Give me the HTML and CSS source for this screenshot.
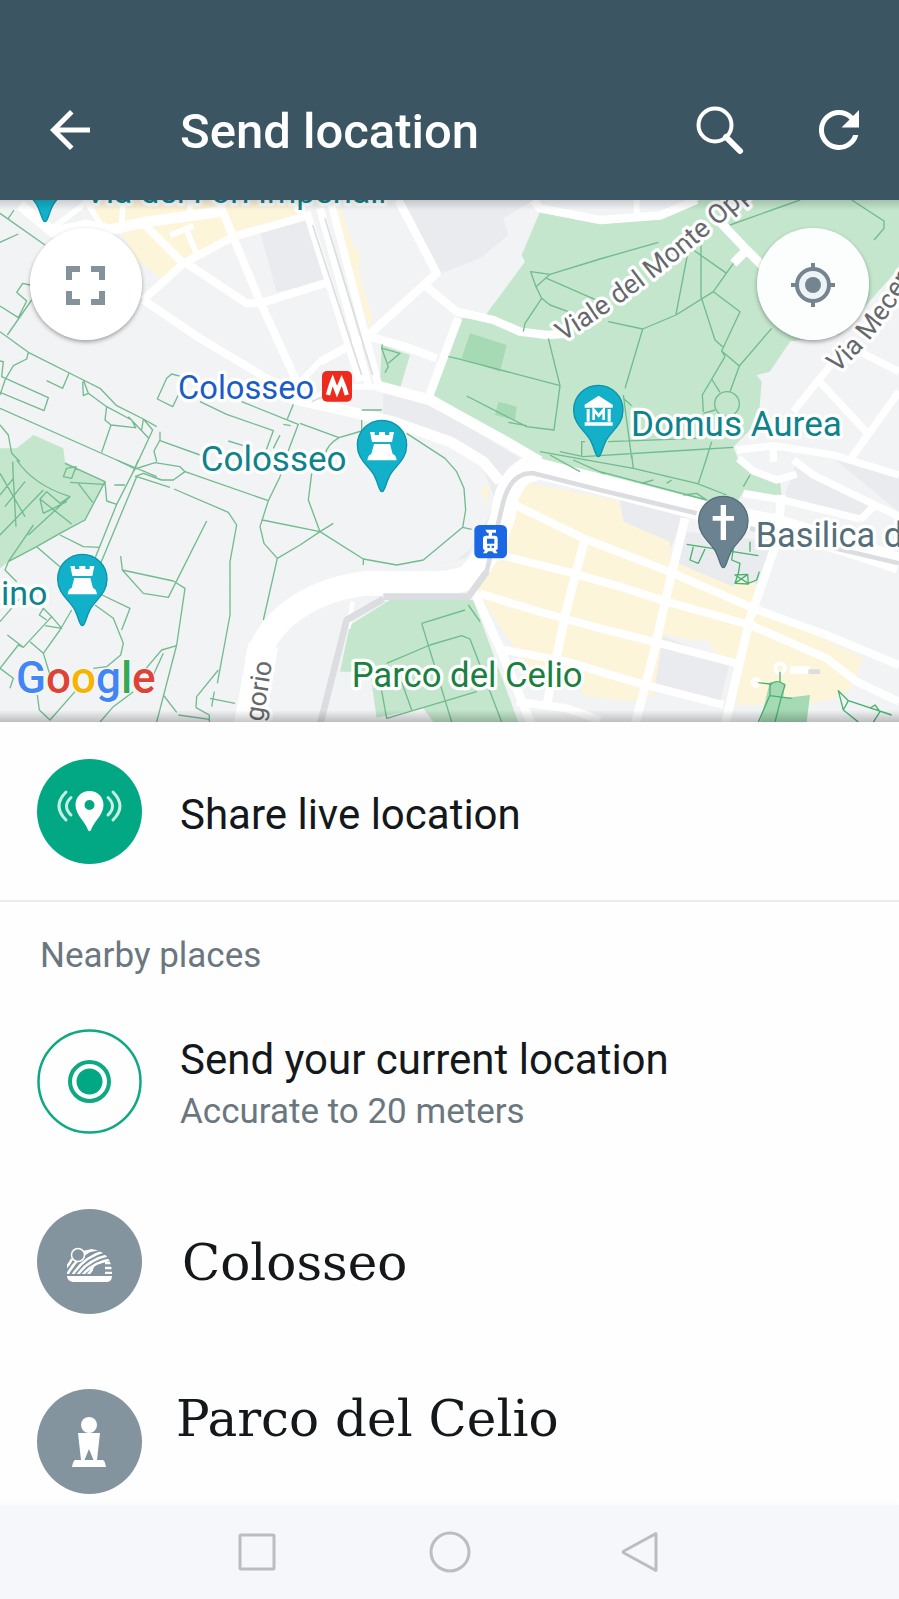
FILE: index.html
```html
<!DOCTYPE html>
<html lang="en">
<head>
<meta charset="utf-8">
<meta name="viewport" content="width=device-width, initial-scale=1">
<title>Send location</title>
<link rel="stylesheet" href="styles.css">
</head>
<body>
<header class="topbar">
  <button class="icon-btn" aria-label="Back">
    <svg viewBox="0 0 24 24"><path fill="currentColor" d="M20 11H7.83l5.59-5.59L12 4l-8 8 8 8 1.41-1.41L7.83 13H20z"/></svg>
  </button>
  <h1 class="topbar-title">Send location</h1>
  <button class="icon-btn" aria-label="Search">
    <svg viewBox="0 0 60 60" fill="none" stroke="currentColor"><circle cx="26" cy="25" r="16.500" stroke-width="4"/><path d="M37 37L51 51" stroke-width="6" stroke-linecap="round"/></svg>
  </button>
  <button class="icon-btn" aria-label="Refresh">
    <svg viewBox="0 0 24 24"><path fill="currentColor" d="M17.65 6.35A7.96 7.96 0 0 0 12 4a8 8 0 1 0 7.73 10h-2.080A6 6 0 1 1 12 6c1.660 0 3.140.69 4.220 1.780L13 11h7V4z"/></svg>
  </button>
</header>

<section class="map" aria-label="Map">
<svg class="map-art" viewBox="0 15 2697 1566" preserveAspectRatio="xMidYMid slice">
  <defs>
    <path id="pin" d="M0 140C-9 140-10 118-22 94C-38 62-74 46-74 0A74 74 0 0 1 74 0C74 46 38 62 22 94C10 118 9 140 0 140Z"/>
    <path id="rook" fill="#fff" d="M-36-39h14v9h13v-9h18v9h13v-9h14l-6 30h-60zM-24-3h48l8 30q10 3 12 19h-88q2-16 12-19z"/>
    <linearGradient id="edgeTop" x2="0" y2="1"><stop stop-color="#000" stop-opacity=".16"/><stop offset="1" stop-color="#000" stop-opacity="0"/></linearGradient>
    <linearGradient id="edgeBottom" x2="0" y2="1"><stop stop-color="#000" stop-opacity="0"/><stop offset="1" stop-color="#000" stop-opacity=".22"/></linearGradient>
  </defs>
  <rect y="15" width="2697" height="1566" fill="#f1f3f4"/>

  <g class="blocks">
    <path d="M780 110L930 70L985 260L830 290ZM1195 15H1600L1510 70L1525 120L1440 190L1310 240ZM1150 590L1290 625L1560 790L1500 900L1400 1090L1300 1110L1370 1095L1488 1000L1497 940L1440 800L1340 735L1150 670Z"/>
    <path d="M1860 915L2060 960L2010 1060L1870 980ZM2060 1010L2330 1040L2260 1210L2020 1120ZM1980 1320L2190 1400L2160 1520L1950 1480ZM2390 800L2620 940L2600 970L2350 915ZM2500 790L2697 840V950Z"/>
  </g>
  <g class="yellow">
    <path d="M270 15H925L900 70L700 122L550 205L485 252L410 195L370 120L290 90ZM1000 40L1022 40L1060 150L1082 180L1075 230L1118 370L1108 400ZM1440 880L1470 870L1460 930Z"/>
    <path d="M1560 860L1800 905L1858 920L1870 980L2010 1040L2010 1095L2200 1175L2220 1150L2280 1170L2270 1230L2590 1390L2550 1485L2500 1510L2410 1530L2210 1530L2220 1400L2140 1370L2130 1340L1990 1320L1960 1500L1890 1520L1750 1500L1740 1470L1590 1430L1440 1200L1430 1180L1480 1090L1520 1000Z"/>
  </g>
  <g class="park">
    <path d="M1620 50L1800 88L1980 70L2100 15H2697V220L2520 420L2370 440L2310 530L2270 540L2285 560L2275 680L2200 755L2215 795L2260 840L2340 860L2345 905L2230 890L2215 915L2120 925L1800 845L1620 795L1480 705L1300 600L1385 370L1450 370L1575 200L1565 180Z"/>
    <path d="M1145 450L1230 480L1200 580L1140 565ZM1170 1215H1420L1440 1270L1555 1581H1300L1270 1540L1130 1568L1110 1430H1020L1050 1290ZM0 760H50L100 720L190 760L195 800L315 860L255 975L110 1055L25 1100L0 1120Z"/>
  </g>
  <path class="base" d="M2697 220V500L2300 600L2310 530L2370 440L2520 420Z"/>
  <path class="park-dark" d="M1410 415L1520 450L1500 530L1385 490ZM1495 620L1550 635L1545 675L1485 660ZM2310 1460L2355 1465L2350 1510L2430 1500L2420 1581H2280Z"/>

  <g class="road">
    <path stroke-width="32" d="M60 30L160 112L260 90L330 104L440 80L660 50"/>
    <path stroke-width="17" d="M150 105L230 45L260 20L300 85M370 15L365 85M570 15V60M510 122L580 92M560 105L592 182"/>
    <path stroke-width="24" d="M430 85L550 205M660 30L780 320L890 560M430 315L550 205L700 125L930 60M430 315L600 430L800 550L910 600M560 205L740 325L780 325L990 260"/>
    <path stroke-width="25" d="M1195 15L1310 235L1100 425L960 500M1280 275L1370 350L1480 375L1560 410L1640 420L1720 415M1375 370L1285 610M1110 425L1230 460L1310 490M1600 15L1620 40L1800 75L1980 62L2090 15"/>
    <path stroke-width="18" d="M1910 15V60M960 500L900 560M930 620L1000 575L1140 575"/>
    <path stroke-width="32" d="M1130 572L1290 615L1500 730L1620 800M870 610L1050 650L1180 680L1350 740L1450 800L1500 860"/>
    <path stroke-width="23" d="M920 50L1080 560M960 40L1105 570M995 30L1135 570"/>
    <path stroke-width="27" d="M2150 70L2240 165L2290 215M2200 205L2240 165"/>
    <path stroke-width="22" d="M2380 650L2460 550L2510 490M2460 560L2605 718M2580 470L2697 530M2550 795L2605 718L2697 590M2210 765L2320 752L2500 780L2697 840M2320 760V800M2215 790L2260 828L2330 855L2390 838M2380 795L2440 840L2697 965M2580 975L2620 935M2230 895L2350 915L2580 972"/>
    <path stroke-width="74" d="M1590 820Q1520 850 1510 960Q1470 1090 1400 1150L1340 1165H1100Q960 1180 860 1260Q790 1320 770 1400"/>
    <path stroke-width="90" d="M790 1350L745 1600"/>
    <path stroke-width="62" d="M1560 840L1620 822L1800 868L2100 945L2330 990L2530 1050L2697 1105"/>
    <path stroke-width="24" d="M1535 925L1750 1030L2020 1135L2260 1240L2480 1320L2697 1410M1500 1080L1700 1130L1860 1175L2000 1220L2250 1290L2480 1390L2570 1460L2697 1520M1440 1195L1600 1245L1800 1300L1960 1340L2210 1405M1490 1360L1700 1400L1900 1460L2170 1530M1550 1520L1700 1540L1800 1575"/>
    <path stroke-width="26" d="M1755 1030L1700 1240L1640 1530M2055 970L2000 1200L1960 1380L1905 1590M2345 900L2330 1040L2250 1270L2175 1590M1420 1185L1500 1360L1595 1590"/>
    <path stroke-width="14" d="M1058 1220L1045 1300"/>
    <circle cx="2340" cy="1420" r="14" stroke-width="12"/><circle cx="2268" cy="1462" r="10" stroke-width="12"/>
    <path stroke-width="22" d="M2370 1425H2430"/>
  </g>
  <g class="rail">
    <path stroke-width="5" d="M938 90L1085 540M975 70L1118 540M935 620L1000 590"/>
    <path stroke-width="20" d="M960 1590L1040 1275L1150 1212M1150 1205H1405L1460 1130"/>
    <path stroke-width="14" d="M1405 1205L1460 1130L1510 920Q1535 830 1600 835L1800 885L2090 955M2250 1000L2697 1105"/>
    <path stroke-width="14" d="M2425 1430H2460"/>
  </g>

  <g class="trail">
    <path d="M0 55L135 150M25 70L42 45M0 142L55 117M90 270L68 265L50 292L80 318L55 368L0 333M95 315L22 420M0 410L85 472L250 555L300 580L350 632L430 672L470 695M85 472L80 492L40 512L15 555L0 600M0 498L10 500L5 545L145 608L132 647L0 592M140 557L188 580L207 535M250 555L265 595L250 602L248 560M265 595L320 635L395 675L408 700M320 635L315 675L333 690L405 698M333 690L305 772M430 672L425 705M0 640L350 795L470 845M0 690L25 720L35 775L60 800M430 672L458 705L400 830M480 710V735L462 768L470 800M480 737L600 780M385 665L445 728"/>
    <path d="M545 545L515 537L500 550L472 612L518 635L535 600M600 620L680 658L820 707L795 775M725 620L895 688L860 780M862 672L880 628M840 720L820 760M850 688L872 692M685 738L740 755M860 780L840 845M900 685L1017 728L1085 708V675M1017 728Q980 750 975 780M1085 645H1145"/>
    <path d="M50 795Q100 870 210 905L85 1020M0 900L40 850L38 800M0 835L75 965M40 850L48 995M75 860L15 935M140 890L120 912L130 955M140 890L180 925L210 905M120 912L215 987M130 955L200 920M0 1020L130 885M195 805L315 860L320 918L350 928L400 830L415 795M200 820L190 845L215 850L228 815L200 820M210 862L310 868M235 865L278 922M315 860L255 975L180 1015L110 1055L25 1100L15 1125L50 1160M110 1055L185 1120M180 1020L250 1055L300 1057M25 1100L100 990"/>
    <path d="M350 795L405 822L465 803L540 815L555 830L805 917L840 845M555 830L520 855H485L430 835L405 845M343 870H375M285 1090L350 928M300 1110L410 845L510 877M522 882L685 952L710 990L690 1100V1260L652 1465M790 1275L832 1090L792 1045L780 995L805 917M787 975L960 1010L1000 985M832 1090L900 1050L960 1010M620 978L505 1207L430 1195L367 1125L362 1083M367 1125L520 1158L555 1180L530 1350L470 1581M300 1197L390 1240L365 1305M285 1230L340 1270L370 1345L362 1380L320 1415L280 1420M225 1490L150 1575L118 1545L112 1500M530 1352L485 1365L430 1430M490 1375L460 1440M655 1425L590 1505L588 1538L628 1560V1581M490 1500L530 1552M535 1560L628 1573M630 1510L705 1525M643 1490L635 1535"/>
    <path d="M215 1245L180 1305L130 1375L90 1340M155 1265L70 1357L22 1320M155 1265L185 1300L135 1292M155 1265L130 1240L118 1260L140 1275M70 1357L55 1350L0 1420L40 1450L30 1480M130 1375L150 1440M0 1280L60 1210M300 1581L340 1535L400 1490"/>
    <path d="M935 835L925 915L960 1010L1090 1092L1190 1110L1270 1095L1388 997L1397 945L1392 880L1370 830L1335 790L1220 715M1090 1092V1110M1388 997L1415 1003"/>
    <path d="M1345 485L1370 490L1680 572L1645 430M1680 572L1662 705L1580 695L1400 603M1525 682L1580 692M1147 448L1145 460L1165 515L1155 533M1147 460L1200 475L1165 505M1592 230L1650 238L1608 275ZM1608 275L1625 310L1575 385L1570 410M1625 310L1650 330L1705 350M1650 238L1800 192L1975 142M1640 250L1800 320M2190 90L2400 15M2555 15L2652 78V100L2622 135"/>
    <path d="M2080 165L2180 235M2200 205L2140 290L2028 360L1928 402L1825 380M1928 402L1875 580M2062 180L2028 358M2103 145V305L2145 435L2168 455M2140 290L2220 350L2165 468L2218 513L2315 400M2175 485L2107 600L2110 650M2218 513L2190 590M2135 552L2160 592M2165 468L2175 485M2110 655L2145 645"/>
    <circle cx="2181" cy="627" r="37"/>
    <path d="M1680 770L1750 785L2070 765L2200 757M1870 600L1895 790M1825 740L2090 730M2135 740L2118 795L2095 865M1745 785V740H1755M1870 610L1895 632"/>
    <path d="M1620 770L1900 820L2090 865L2180 900M1800 830L2120 915L2090 895L2050 900M1900 820L1895 780M1925 865L1960 855M1720 795L1810 835M1650 780L1740 830M2000 865L2015 855M2230 875L2250 840M1265 1285L1395 1245M1265 1285L1355 1581M1160 1405L1290 1350L1385 1322L1410 1332L1505 1581M1140 1460L1160 1570L1430 1490M1205 1460L1235 1545M1405 1230L1440 1280"/>
  </g>
  <path class="trail trail-bright" d="M2060 1048L2275 1082M2080 1055L2070 1095L2095 1105L2115 1062M2250 1070V1040M2200 1060L2195 1095L2220 1105L2215 1135L2205 1165L2245 1167L2243 1138L2205 1140L2245 1165L2270 1155L2278 1130M2205 1165L2243 1138M2310 1470Q2330 1450 2355 1470L2345 1502M2310 1465V1500L2275 1581M2275 1463L2310 1467M2340 1430V1460M2310 1502L2375 1510M2345 1502L2325 1581M2515 1487L2545 1517L2530 1545ZM2545 1517L2675 1560M2530 1545L2575 1581M2610 1540L2625 1530L2640 1550L2620 1581"/>

  <g class="labels">
    <text class="teal" x="254" y="24" font-size="100">Via dei Fori Imperiali</text>
    <text class="blue" x="534" y="612" font-size="98">Colosseo</text>
    <text class="teal" x="602" y="828" font-size="105">Colosseo</text>
    <text class="teal" x="1893" y="723" font-size="105">Domus Aurea</text>
    <text class="slate" x="2267" y="1056" font-size="103">Basilica di San Clemente</text>
    <text class="green" x="1055" y="1477" font-size="104">Parco del Celio</text>
    <text class="teal" x="142" y="1230" font-size="102" text-anchor="end">Palatino</text>
    <path id="oppio" fill="none" d="M1688 440Q1950 280 2270 -10"/>
    <path id="mecenate" fill="none" d="M2510 534Q2620 450 2740 240"/>
    <text class="street" font-size="81"><textPath href="#oppio">Viale del Monte Oppio</textPath></text>
    <text class="street" font-size="81"><textPath href="#mecenate">Via Mecenate</textPath></text>
    <text class="street" font-size="80" transform="translate(788 1582) rotate(-81)">gorio</text>
    <text class="brand" x="48" y="1493" font-size="132"><tspan fill="#4285f4">G</tspan><tspan fill="#db4437">o</tspan><tspan fill="#f4b400">o</tspan><tspan fill="#4285f4">g</tspan><tspan fill="#34a853">l</tspan><tspan fill="#db4437">e</tspan></text>
  </g>

  <g fill="#12b1c9" stroke="#0c93ab" stroke-width="4">
    <use href="#pin" x="135" y="-60"/><use href="#pin" x="1146" y="750"/><use href="#pin" x="247" y="1152"/><use href="#pin" x="1795" y="645"/>
  </g>
  <use href="#pin" x="2170" y="978" fill="#6b8390" stroke="#546e7a" stroke-width="4"/>
  <use href="#rook" x="1146" y="750"/><use href="#rook" x="247" y="1152"/>
  <path fill="#fff" d="M2162 930h16v33h24v14h-24v58h-16v-58h-24v-14h24z"/>
  <g transform="translate(1796 648)">
    <path fill="#fff" d="M0-46L42-19V-10H-42V-19ZM-36-6H-27V32H-36ZM27-6H36V32H27ZM-42 34H42V44H-42Z"/>
    <path fill="none" stroke="#fff" stroke-width="8" d="M-15 27V-4L0 14L15-4V27"/>
  </g>
  <rect x="966" y="528" width="90" height="92" rx="15" fill="#ee2a1c"/>
  <path fill="none" stroke="#fff" stroke-width="13" d="M984 600Q990 575 998 556L1011 590L1025 556Q1034 575 1040 600"/>
  <rect x="1423" y="990" width="98" height="100" rx="16" fill="#1a68e4"/>
  <path fill="#fff" fill-rule="evenodd" d="M1456 1004h32v9h-12v9h8q9 0 9 9v28q0 6-6 7l6 9h-11l-5-6h-12l-5 6h-11l6-9q-6-1-6-7v-28q0-9 9-9h8v-9h-5zM1461 1031v15h22v-15zM1462 1052v7h7v-7zM1475 1052v7h7v-7z"/>

  <rect y="15" width="2697" height="30" fill="url(#edgeTop)"/>
  <rect y="1545" width="2697" height="36" fill="url(#edgeBottom)"/>
</svg>
  <button class="map-btn map-btn-full" aria-label="Full screen">
    <svg viewBox="0 0 112 112" fill="none" stroke="#84929b" stroke-width="6"><path d="M39 49V41H47M64 41H72V49M72 66V74H64M47 74H39V66" stroke-linecap="square"/></svg>
  </button>
  <button class="map-btn map-btn-locate" aria-label="My location">
    <svg viewBox="0 0 112 112"><g stroke="#75848f" stroke-width="4"><circle cx="56" cy="57" r="16" fill="#edf4f8"/><path d="M56 35V42M56 72V79M34 57H41M71 57H78"/></g><circle cx="56" cy="57" r="8" fill="#75848f"/></svg>
  </button>
</section>

<main class="places">
  <a class="row row-live" href="#live">
    <svg class="avatar" viewBox="0 0 105 105"><circle cx="52.500" cy="52.500" r="52.500" fill="#02a884"/><path fill="#fff" fill-rule="evenodd" d="M52.500 32C44.500 32 38.500 38 38.500 46C38.500 56 48 62 51 71Q52.500 73.500 54 71C57 62 66.500 56 66.500 46C66.500 38 60.500 32 52.500 32ZM52.500 41a5 5 0 1 1 0 10a5 5 0 1 1 0-10Z"/><path fill="none" stroke="#c5f0e4" stroke-width="3" stroke-linecap="round" d="M29 33Q15 47 29 61M34 38.500Q25 47 34 56M76 33Q90 47 76 61M71 38.500Q80 47 71 56"/></svg>
    <span class="text"><span class="name">Share live location</span></span>
  </a>
  <h2 class="section-title">Nearby places</h2>
  <a class="row" href="#current">
    <svg class="avatar" viewBox="0 0 105 105" fill="none" stroke="#0ea882"><circle cx="52.500" cy="52.500" r="51" stroke-width="2.500"/><circle cx="52.500" cy="52.500" r="19.500" stroke-width="4"/><circle cx="52.500" cy="52.500" r="13" fill="#02a884" stroke="none"/></svg>
    <span class="text"><span class="name">Send your current location</span><span class="detail">Accurate to 20 meters</span></span>
  </a>
  <a class="row" href="#colosseo">
    <svg class="avatar" viewBox="0 0 105 105"><circle cx="52.500" cy="52.500" r="52.500" fill="#83949e"/><clipPath id="dome"><path d="M30 65V50Q34 38 44 41Q56 38 66 44Q75 50 75 65Z"/></clipPath><g clip-path="url(#dome)" fill="none" stroke="#fff" stroke-width="2.600"><path d="M26 62Q32 56 35 50M30 66Q42 44 62 38M35 67Q46 48 68 42M40 67Q50 51 72 46M45 67Q54 54 76 50M50 67L57 58M47 43L62 40"/><path d="M68 54H76M68 59H76M68 64H76"/></g><circle cx="41" cy="46" r="6.500" fill="#83949e" stroke="#fff" stroke-width="1.500"/><path fill="#83949e" d="M56 65V60Q58 55 68 54V65Z"/><path fill="#fff" d="M30 67H75Q75 73 69 73H36Q30 72 30 67Z"/></svg>
    <span class="text"><span class="place">Colosseo</span></span>
  </a>
  <a class="row row-last" href="#celio">
    <svg class="avatar" viewBox="0 0 105 105"><circle cx="52.500" cy="52.500" r="52.500" fill="#83949e"/><circle cx="52" cy="36" r="8" fill="#fff"/><path fill="#fff" d="M41 44H63L60 71H56.500L52 60L47.500 71H44ZM38 71H66Q68 72 69 78H35Q36 72 38 71Z"/></svg>
    <span class="text"><span class="place">Parco del Celio</span></span>
  </a>
</main>

<nav class="navbar" aria-label="System">
  <button class="nav-btn" aria-label="Recent apps"><svg viewBox="0 0 42 42"><rect x="3" y="4" width="34" height="34" rx="1"/></svg></button>
  <button class="nav-btn" aria-label="Home"><svg viewBox="0 0 42 42"><circle cx="21" cy="21" r="19"/></svg></button>
  <button class="nav-btn" aria-label="Back"><svg viewBox="0 0 42 42"><path d="M35 3V39Q35 40 34 39L3 22Q1 21 3 20L34 3Q35 2 35 3Z"/></svg></button>
</nav>
</body>
</html>
```
FILE: styles.css
```css
* { box-sizing: border-box; }

body {
  margin: 0;
  min-height: 100vh;
  display: flex;
  flex-direction: column;
  background: #fefefe;
  color: #14181b;
  font-family: Roboto, "Liberation Sans", sans-serif;
}

button {
  padding: 0;
  border: 0;
  background: none;
  color: inherit;
}

svg { display: block; }

.topbar {
  display: flex;
  align-items: center;
  gap: 60px;
  padding: 60px 30px 0 40px;
  height: 200px;
  background: #3b5662;
  color: #fff;
}

.topbar-title {
  flex: 1;
  margin: 0;
  padding: 4px 0 0 20px;
  font-size: 49px;
  font-weight: 500;
  line-height: 60px;
}

.icon-btn, .icon-btn svg {
  width: 60px;
  height: 60px;
}

.map { position: relative; }

.map-art {
  width: 100%;
  height: auto;
}

.base { fill: #f1f3f4; }
.blocks { fill: #e9ebee; }
.yellow { fill: #fdf5da; }
.park { fill: #c3e6cc; }
.park-dark { fill: #a5dab5; }
.road { fill: none; stroke: #fff; stroke-linejoin: round; }
.rail { fill: none; stroke: #dcdde0; stroke-linejoin: round; }
.trail { fill: none; stroke: #72bb8f; stroke-width: 4; stroke-linejoin: round; }
.trail-bright { stroke: #48b370; }

.labels text {
  stroke: #fff;
  stroke-width: 20px;
  stroke-linejoin: round;
  paint-order: stroke;
}
.labels .brand { font-weight: 500; stroke-width: 4px; }
.teal { fill: #0d838c; }
.blue { fill: #1b5bc9; }
.slate { fill: #546e7a; }
.green { fill: #1a8040; }
.street { fill: #66696c; }

.map-btn {
  position: absolute;
  top: 28px;
  width: 112px;
  height: 112px;
  border-radius: 50%;
  background: rgba(255, 255, 255, .95);
  box-shadow: 0 2px 4px rgba(0, 0, 0, .35);
}
.map-btn-full { left: 30px; }
.map-btn-locate { right: 30px; }

.places { flex: 1; }

.row {
  display: flex;
  align-items: center;
  gap: 38px;
  min-height: 180px;
  padding: 0 37px;
  color: inherit;
  text-decoration: none;
}

.row-live { border-bottom: 2px solid #e9ebec; }

.row-last {
  align-items: flex-start;
  min-height: 0;
  padding: 38px 37px 11px;
  gap: 34px;
}

.avatar {
  flex: none;
  width: 105px;
  height: 105px;
}

.text {
  display: flex;
  flex-direction: column;
  padding-top: 8px;
}

.row-last .text { padding: 0; }

.name { font-size: 42px; line-height: 54px; }
.detail { font-size: 35px; line-height: 50px; color: #6b777e; }

.place {
  padding: 0 0 4px 2px;
  font-family: "DejaVu Serif", serif;
  font-size: 50px;
  line-height: 60px;
}
.row-last .place { padding: 0; }

.section-title {
  margin: 0;
  padding: 33px 40px 14px;
  font-size: 35px;
  font-weight: 400;
  line-height: 42px;
  color: #6b777e;
}

.navbar {
  display: flex;
  align-items: center;
  justify-content: center;
  gap: 150px;
  height: 94px;
  background: #f6f7fa;
  box-shadow: 0 0 6px #f6f7fa;
}

.nav-btn {
  width: 42px;
  height: 42px;
}

.nav-btn svg {
  fill: none;
  stroke: #bcbdbf;
  stroke-width: 3px;
}
```
